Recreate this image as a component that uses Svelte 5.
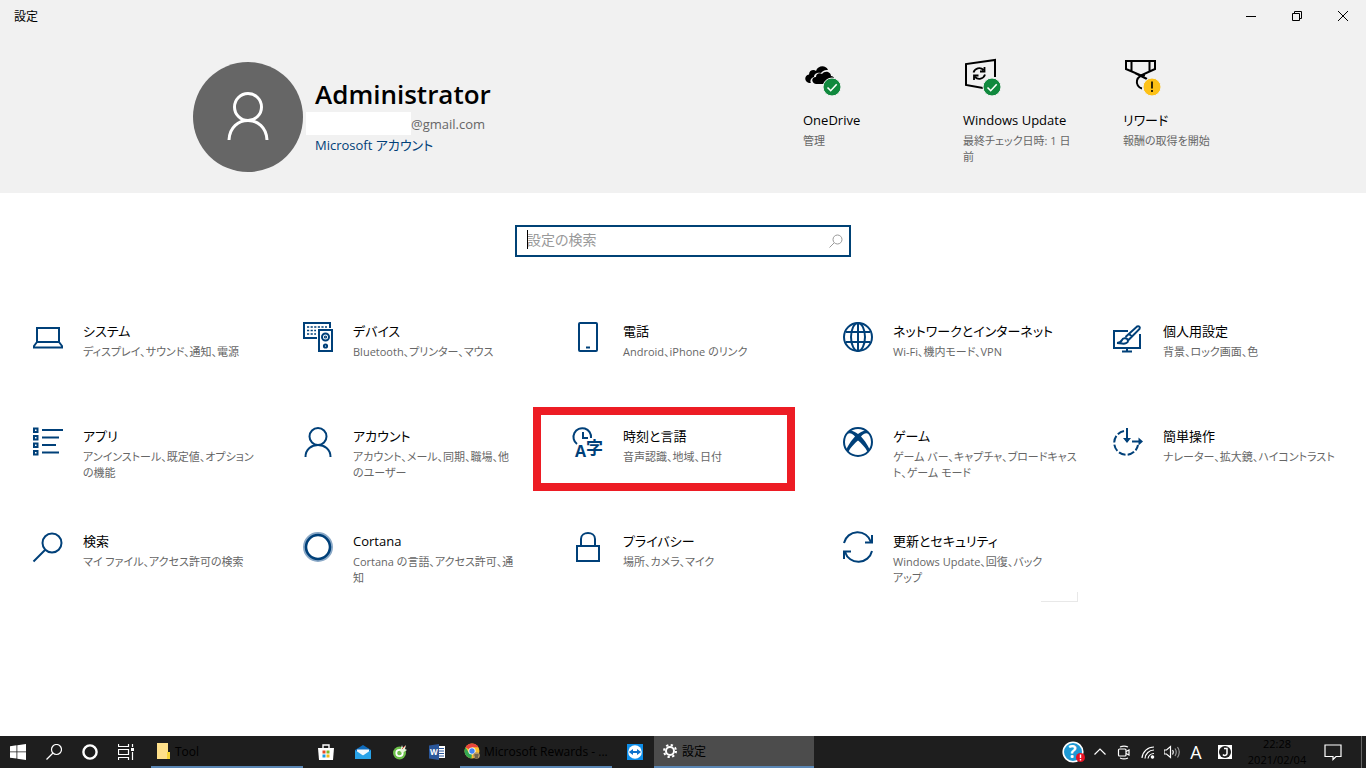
<script lang="ts">
    type Entry = { icon: string; title: string; text: string; marked?: boolean };

    const status: Entry[] = [
        { icon: 'onedrive', title: 'OneDrive', text: '管理' },
        { icon: 'update', title: 'Windows Update', text: '最終チェック日時: 1 日\n前' },
        { icon: 'rewards', title: 'リワード', text: '報酬の取得を開始' },
    ];

    const categories: Entry[] = [
        { icon: 'system', title: 'システム', text: 'ディスプレイ、サウンド、通知、電源' },
        { icon: 'devices', title: 'デバイス', text: 'Bluetooth、プリンター、マウス' },
        { icon: 'phone', title: '電話', text: 'Android、iPhone のリンク' },
        { icon: 'network', title: 'ネットワークとインターネット', text: 'Wi-Fi、機内モード、VPN' },
        { icon: 'personal', title: '個人用設定', text: '背景、ロック画面、色' },
        { icon: 'apps', title: 'アプリ', text: 'アンインストール、既定値、オプション\nの機能' },
        { icon: 'account', title: 'アカウント', text: 'アカウント、メール、同期、職場、他\nのユーザー' },
        { icon: 'time', title: '時刻と言語', text: '音声認識、地域、日付', marked: true },
        { icon: 'games', title: 'ゲーム', text: 'ゲーム バー、キャプチャ、ブロードキャス\nト、ゲーム モード' },
        { icon: 'ease', title: '簡単操作', text: 'ナレーター、拡大鏡、ハイコントラスト' },
        { icon: 'search', title: '検索', text: 'マイ ファイル、アクセス許可の検索' },
        { icon: 'cortana', title: 'Cortana', text: 'Cortana の言語、アクセス許可、通\n知' },
        { icon: 'privacy', title: 'プライバシー', text: '場所、カメラ、マイク' },
        { icon: 'security', title: '更新とセキュリティ', text: 'Windows Update、回復、バック\nアップ' },
    ];

    let query = $state('');
</script>

{#snippet check()}
    <circle cx="29" cy="30" r="9" fill="#10893e" stroke="#f1f1f1" />
    <path d="M24.5 30.5l3.2 3.2 6-6.4" fill="none" stroke="#fff" stroke-width="1.6" />
{/snippet}

{#snippet statusIcon(name: string)}
    <svg class="status-icon" viewBox="0 0 40 40" aria-hidden="true">
        {#if name === 'onedrive'}
            <path d="M6 26C1 25 1 18 6 17.500C6 13 11 12 13 14C15 8 23 8 25 13C22 12.500 19 14 18 16C13 15 11 18 11 20C7 21 7 25 8 26z" />
            <path d="M13 27C8 26 8 20 13 20C13 16 17 15.500 19 17C22 13 28 15 28 19C32 19 33 25 29 27z" />
            {@render check()}
        {:else if name === 'update'}
            <path d="M20 31L3 28V7l29-4v17" fill="none" stroke="#000" stroke-width="2" />
            <path d="M10.500 15.500a6 6 0 0 1 10-2.500M21.500 10v4.500h-4.500M22 17.500a6 6 0 0 1-10 2.500M11 23v-4.500h4.500" fill="none" stroke="#000" stroke-width="1.8" />
            {@render check()}
        {:else}
            <path d="M3 4h29v8L18 18.500 3 12zM8.500 4v10M26.500 4v10M12 16l12 6" fill="none" stroke="#000" stroke-width="2" />
            <path d="M22 18.500a6.500 6.500 0 1 0-3 13" fill="none" stroke="#000" stroke-width="2" />
            <circle cx="29" cy="30" r="9" fill="#fdc116" stroke="#f1f1f1" />
            <path d="M29 24.500v7M29 33v2" stroke="#000" stroke-width="1.6" />
        {/if}
    </svg>
{/snippet}

{#snippet icon(name: string)}
    <svg class="icon" viewBox="0 0 30 30" aria-hidden="true">
        {#if name === 'system'}
            <path d="M4 6h22v14H4zM4 20L1 24v1.500h28V24l-3-4" />
        {:else if name === 'devices'}
            <path d="M14 16H1V1h26v5" />
            <path d="M4 5h20M4 8.500h9M4 12h9" stroke-width="1.600" stroke-dasharray="2.200 1.400" />
            <rect x="16" y="8" width="13" height="21" />
            <circle cx="22.500" cy="15" r="3.500" /><circle cx="22.500" cy="15" r=".6" />
            <circle cx="22.500" cy="24" r="1.600" />
        {:else if name === 'phone'}
            <rect x="6" y="1" width="18" height="28" rx="1" /><path d="M13 25.500h4" />
        {:else if name === 'network'}
            <circle cx="15" cy="15" r="14" /><ellipse cx="15" cy="15" rx="7" ry="14" />
            <path d="M15 1v28M3 10h24M3 20h24" />
        {:else if name === 'personal'}
            <path d="M15 9H1v17h26V12M14 26v3M9 29.500h10" />
            <path d="M4 21c3 0 4-1 5-3 1-3 6-2 6 1 0 2-3 3-6 2.500zM12.500 15L24 4.500c2-1 3.500.5 2.500 2.500L15.500 18M16 12l3 2.500" />
        {:else if name === 'apps'}
            <path d="M1 1.500h3.500v3.500H1zM1 9h3.500v3.500H1zM1 16.500h3.500V20H1zM1 24h3.500v3.500H1zM9 3h21M9 10.500h17M9 18h14M9 25.500h17" />
        {:else if name === 'account'}
            <circle cx="15" cy="9.500" r="8.500" /><path d="M2.500 30c0-16 25-16 25 0" />
        {:else if name === 'time'}
            <path d="M4 17A8.800 8.800 0 1 1 18 11M10 5v6h5" />
            <text x="2" y="30" font-size="16">A</text>
            <text x="13" y="27" font-size="17">字</text>
        {:else if name === 'games'}
            <circle cx="15" cy="15" r="14" />
            <path d="M6 4c3-1 6 1 9 3 3-2 6-4 9-3l2 3c-3-2-6 0-8 2.500 4 4.500 8 10 8.500 13.500l-2 2C23 21 18 16 15 13.500 12 16 7 21 5.500 25l-2-2C4 19.500 8 14 12 9.500 10 7 7 5 4 7z" fill="currentColor" stroke="none" />
        {:else if name === 'ease'}
            <path d="M11 4A12 12 0 1 0 25 18" stroke-dasharray="7 2.200" />
            <path d="M14 1v13M19 14.500h9" />
            <path d="M10 11h8l-4 5zM25.500 10.500v8l4.500-4z" fill="currentColor" stroke="none" />
        {:else if name === 'search'}
            <circle cx="19" cy="11" r="9.500" /><path d="M12 18L.5 29.500" />
        {:else if name === 'cortana'}
            <circle cx="15" cy="15" r="13" stroke="#8ba9c7" stroke-width="4" />
            <circle cx="15" cy="15" r="12" stroke-width="2.500" />
        {:else if name === 'privacy'}
            <path d="M4 14h22v15H4zM8 14V7c0-8 14-8 14 0v7" />
        {:else}
            <path d="M1 11A14 14 0 0 1 28 10M29 3v7.500h-7M29 19A14 14 0 0 1 2 20M1 27v-7.500h7" />
        {/if}
    </svg>
{/snippet}

<div class="window">
    <header>
        <div class="titlebar">
            <h1>設定</h1>
            <div class="controls">
                <button aria-label="最小化"><svg viewBox="0 0 12 12"><path d="M1 6.500h10" /></svg></button>
                <button aria-label="元に戻す"><svg viewBox="0 0 12 12"><path d="M1.500 3.500h7v7h-7zM3.500 3.500v-2h7v7h-2" /></svg></button>
                <button aria-label="閉じる"><svg viewBox="0 0 12 12"><path d="M1 1l10 10M11 1L1 11" /></svg></button>
            </div>
        </div>

        <div class="summary">
            <div class="profile">
                <div class="avatar">
                    <svg viewBox="0 0 42 50" aria-hidden="true"><circle cx="21" cy="15" r="13.500" /><path d="M2 48c1-26 37-26 38 0" /></svg>
                </div>
                <div class="who">
                    <h2>Administrator</h2>
                    <p class="mail"><span class="blank"></span>@gmail.com</p>
                    <a href="#account">Microsoft アカウント</a>
                </div>
            </div>
            <div class="statuses">
                {#each status as item}
                    <a class="status" href="#{item.icon}">
                        {@render statusIcon(item.icon)}
                        <span class="title">{item.title}</span>
                        <span class="text">{item.text}</span>
                    </a>
                {/each}
            </div>
        </div>
    </header>

    <main>
        <div class="search">
            <input type="text" placeholder="設定の検索" aria-label="設定の検索" bind:value={query} />
            <span class="caret"></span>
            <svg viewBox="0 0 14 14" aria-hidden="true"><circle cx="8.500" cy="5.500" r="4.500" /><path d="M5 9L.5 13.500" /></svg>
        </div>

        <nav>
            {#each categories as item}
                <a class="tile" href="#{item.icon}">
                    {@render icon(item.icon)}
                    <span class="label">
                        <span class="title">{item.title}</span>
                        <span class="text">{item.text}</span>
                    </span>
                    {#if item.marked}<span class="mark"></span>{/if}
                    {#if item.icon === 'security'}<span class="corner"></span>{/if}
                </a>
            {/each}
        </nav>
    </main>

    <footer>
        <button class="key" aria-label="スタート">
            <svg viewBox="0 0 16 16"><path d="M0 2.300l6.500-1v6.200H0zM7.300 1.200L16 0v7.500H7.300zM0 8.300h6.500v6.300L0 13.700zM7.300 8.300H16V16l-8.700-1.200z" fill="#fff" /></svg>
        </button>
        <button class="key" aria-label="検索">
            <svg viewBox="0 0 16 16" class="line"><circle cx="10.500" cy="5.500" r="5" /><path d="M7 9L.5 15.500" /></svg>
        </button>
        <button class="key" aria-label="Cortana">
            <svg viewBox="0 0 16 16" class="line"><circle cx="8" cy="8" r="6.600" stroke-width="2.400" /></svg>
        </button>
        <button class="key" aria-label="タスク ビュー">
            <svg viewBox="0 0 16 16" class="line"><path d="M.5 0v2.500h10V0M.5 5.500h10v5H.5zM.5 16v-2.500h10V16M14.500 0v3M14.500 8v8" /><path d="M13 5.500h3" stroke-width="3" /></svg>
        </button>
        <button class="task first">
            <svg viewBox="0 0 16 16"><path d="M2 0h11v16H2z" fill="#ffe08a" /><path d="M12 9h3v7h-3z" fill="#f6d438" /></svg>
            <span>Tool</span>
        </button>
        <button class="app" aria-label="Microsoft Store">
            <svg viewBox="0 0 16 16"><path d="M5 4V1h6v3" fill="none" stroke="#fff" stroke-width="1.400" /><path d="M0 4h16l-1 12H1z" fill="#fff" /><path d="M4.500 6.500h3v3h-3z" fill="#e74c25" /><path d="M8.500 6.500h3v3h-3z" fill="#7db928" /><path d="M4.500 10.500h3v3h-3z" fill="#1d9de0" /><path d="M8.500 10.500h3v3h-3z" fill="#f5b914" /></svg>
        </button>
        <button class="app" aria-label="メール">
            <svg viewBox="0 0 16 16"><path d="M0 6l8-5 8 5v9H0z" fill="#0f6cbd" /><path d="M2 5.500h12V9l-6 3-6-3z" fill="#f2f8fc" /><path d="M0 6l8 5.500L16 6v9H0z" fill="#29a3e8" /></svg>
        </button>
        <button class="app" aria-label="Cốc Cốc">
            <svg viewBox="0 0 16 16"><circle cx="7.500" cy="9" r="6.500" fill="#6cc04a" /><circle cx="7.500" cy="9" r="3.200" fill="none" stroke="#fff" stroke-width="1.800" /><path d="M8 7l2-6 1 3 3-3-1 4 2 1-5 3z" fill="#e5f4d9" /><path d="M10 5l3-3" stroke="#e4584f" /></svg>
        </button>
        <button class="app" aria-label="Word">
            <svg viewBox="0 0 16 16"><path d="M8 2h8v12H8z" fill="#fff" /><path d="M10 4.500h5M10 7h5M10 9.500h5M10 12h5" stroke="#2b579a" /><path d="M0 1.500L10 0v16L0 14.500z" fill="#2b579a" /><text x="1" y="11" font-size="8" font-weight="700" fill="#fff">W</text></svg>
        </button>
        <button class="task browser">
            <svg viewBox="0 0 16 16"><circle cx="8" cy="8" r="7.500" fill="#fbc02d" /><path d="M8 8L1.500 4.200A7.500 7.500 0 0 1 14.500 4.200H8z" fill="#e8453c" /><path d="M8 8l-.5 7.500A7.500 7.500 0 0 1 1.500 4.200L5 10z" fill="#34a853" /><circle cx="8" cy="8" r="3.600" fill="#fff" /><circle cx="8" cy="8" r="2.700" fill="#4285f4" /><circle cx="12.500" cy="12.500" r="3.300" fill="#b39667" /><path d="M10.500 12h4M11 14h3" stroke="#333" /></svg>
            <span>Microsoft Rewards - ...</span>
        </button>
        <button class="app wide" aria-label="TeamViewer">
            <svg viewBox="0 0 16 16"><path d="M0 0h16v16H0z" fill="#0e8ee9" /><circle cx="8" cy="8" r="6.800" fill="#fff" /><path d="M1.800 8L6 5v2h4V5l4.200 3L10 11V9H6v2z" fill="#0e72cc" /></svg>
        </button>
        <button class="task active">
            <svg viewBox="0 0 16 16" class="line"><circle cx="8" cy="8" r="4" stroke-width="2" /><circle cx="8" cy="8" r="6" stroke-width="2" stroke-dasharray="2.300 2.412" /></svg>
            <span>設定</span>
        </button>

        <div class="tray">
            <button class="help" aria-label="ヘルプ">
                <svg viewBox="0 0 24 22"><circle cx="11" cy="11" r="9.800" fill="#1f9ad6" stroke="#fff" stroke-width="1.600" /><text x="6.500" y="17" font-size="17" font-weight="700" fill="#fff">?</text><circle cx="18.500" cy="16.500" r="4.500" fill="#e81123" /><path d="M18.500 13.500v3.500M18.500 18v1.500" stroke="#fff" stroke-width="1.400" /></svg>
            </button>
            <button aria-label="隠れているインジケーター"><svg viewBox="0 0 16 16" class="line"><path d="M2.500 10.500L8 5l5.500 5.500" /></svg></button>
            <button aria-label="会議"><svg viewBox="0 0 16 16" class="line"><rect x="2.500" y="5" width="7.500" height="7" rx="1" /><path d="M10 7.500l3-1.500v5l-3-1.500M4 3a6 3 0 0 1 8 0M4 14a6 3 0 0 0 8 0" /></svg></button>
            <button aria-label="ネットワーク"><svg viewBox="0 0 16 16" class="line"><path d="M2 14A12 12 0 0 1 14 3M5 14.500A9 9 0 0 1 14 6M8 14.500A6 6 0 0 1 14 9.500" /><circle cx="12.500" cy="13" r="1.200" fill="#fff" /></svg></button>
            <button aria-label="音量"><svg viewBox="0 0 16 16" class="line"><path d="M0 6h2.500L6.500 2.500v11L2.500 10H0zM8.500 6q1.500 2 0 4.500" /><path d="M11 4.500q2.500 3.500 0 7.500M13.500 3q3.500 5 0 10.500" stroke="#999" /></svg></button>
            <button class="ime">A</button>
            <button class="ime-mode" aria-label="IME"><svg viewBox="0 0 14 14"><path d="M0 0h14v14H0z" fill="#fff" /><circle cx="7" cy="7" r="6" fill="#1e1e1e" /><path d="M6 3.500h3v5c0 2-3 2.500-4 1" fill="none" stroke="#fff" stroke-width="1.500" /></svg></button>
            <div class="clock"><span>22:28</span><span>2021/02/04</span></div>
            <button class="notice" aria-label="通知"><svg viewBox="0 0 18 18" class="line"><path d="M1 2h16v11.500h-5l-3 3v-3H1z" /></svg></button>
            <button class="desktop" aria-label="デスクトップの表示"></button>
        </div>
    </footer>
</div>

<style>
    :global(body) {
        margin: 0;
    }

    .window {
        min-height: 100vh;
        display: flex;
        flex-direction: column;
        background: #fff;
        color: #000;
        font-family: "Open Sans", "Noto Sans CJK JP", sans-serif;
        font-size: 13px;
        font-feature-settings: "palt";
    }

    h1, h2, p {
        margin: 0;
    }

    a {
        color: inherit;
        text-decoration: none;
    }

    button {
        display: flex;
        align-items: center;
        justify-content: center;
        padding: 0;
        border: none;
        background: none;
        color: inherit;
        font: inherit;
    }

    /* header */
    header {
        height: 193px;
        background: #f1f1f1;
    }

    .titlebar {
        display: flex;
        justify-content: space-between;
        height: 32px;
    }

    h1 {
        padding-left: 14px;
        font-size: 12px;
        font-weight: 400;
        line-height: 34px;
    }

    .controls {
        display: flex;
    }

    .controls button {
        width: 46px;
        height: 32px;
    }

    .controls svg {
        width: 12px;
        height: 12px;
        fill: none;
        stroke: #000;
    }

    .summary {
        display: flex;
        justify-content: space-between;
        padding: 25px 83px 0 193px;
    }

    .profile {
        display: flex;
        padding-top: 5px;
    }

    .avatar {
        display: flex;
        align-items: center;
        justify-content: center;
        width: 110px;
        height: 110px;
        border-radius: 50%;
        background: #666;
    }

    .avatar svg {
        width: 42px;
        height: 50px;
        fill: none;
        stroke: #fff;
        stroke-width: 3;
    }

    .who {
        padding: 14px 0 0 12px;
    }

    h2 {
        font-size: 26px;
        font-weight: 600;
        line-height: 36px;
    }

    .mail {
        display: flex;
        height: 23px;
        color: #666;
        line-height: 24px;
    }

    .blank {
        width: 105px;
        margin-left: -9px;
        background: #fff;
    }

    .who a {
        color: #004079;
        line-height: 20px;
    }

    .statuses {
        display: flex;
    }

    .status {
        display: flex;
        flex-direction: column;
        width: 160px;
    }

    .status-icon {
        width: 40px;
        height: 40px;
        margin-bottom: 14px;
    }

    .title {
        line-height: 18px;
    }

    .text {
        margin-top: 4px;
        color: #666;
        font-size: 11px;
        line-height: 16px;
        white-space: pre;
    }

    /* content */
    main {
        flex: 1;
    }

    .search {
        position: relative;
        width: 336px;
        margin: 32px auto 65px;
    }

    .search input {
        display: block;
        box-sizing: border-box;
        width: 100%;
        height: 32px;
        padding: 0 32px 3px 10px;
        border: 2px solid #004275;
        outline: none;
        font: inherit;
        font-size: 14px;
        font-feature-settings: inherit;
    }

    .search input::placeholder {
        color: #999;
    }

    .search svg {
        position: absolute;
        top: 9px;
        right: 8px;
        width: 14px;
        height: 14px;
        fill: none;
        stroke: #999;
    }

    .caret {
        position: absolute;
        top: 5px;
        left: 12px;
        width: 1px;
        height: 19px;
        background: #000;
    }

    nav {
        display: grid;
        grid-template-columns: repeat(5, minmax(0, 1fr));
        padding: 0 8px;
    }

    .tile {
        position: relative;
        display: flex;
        gap: 20px;
        min-height: 105px;
        padding-left: 25px;
        box-sizing: border-box;
    }

    .icon {
        flex: none;
        width: 30px;
        height: 30px;
        overflow: visible;
        color: #004079;
        fill: none;
        stroke: currentColor;
        stroke-width: 2;
    }

    .icon text {
        fill: currentColor;
        stroke: none;
        font-weight: 700;
    }

    .label {
        display: flex;
        flex-direction: column;
    }

    .mark {
        position: absolute;
        top: -20px;
        left: -15px;
        right: 23px;
        height: 68px;
        border: 8px solid #ed1c24;
    }

    .corner {
        position: absolute;
        top: 60px;
        right: 10px;
        width: 36px;
        height: 9px;
        border-right: 1px solid #e8e8e8;
        border-bottom: 1px solid #e8e8e8;
    }

    /* taskbar */
    footer {
        display: flex;
        height: 32px;
        background: #1e1e1e;
        color: #000;
        font-size: 12px;
    }

    footer svg {
        width: 16px;
        height: 16px;
    }

    .line {
        fill: none;
        stroke: #fff;
        stroke-width: 1.2;
    }

    .key {
        width: 36px;
    }

    .app {
        width: 37px;
    }

    .app.wide {
        width: 42px;
        padding-left: 4px;
        box-sizing: border-box;
    }

    .task {
        justify-content: flex-start;
        gap: 4px;
        width: 152px;
        padding-left: 4px;
        box-sizing: border-box;
        border-bottom: 2px solid #5a86b4;
        white-space: nowrap;
    }

    .task.first {
        margin: 0 4px 0 7px;
    }

    .task.browser {
        margin-left: 5px;
    }

    .task.active {
        width: 160px;
        padding-left: 8px;
        background: #4c4c4c;
    }

    .tray {
        display: flex;
        margin-left: auto;
    }

    .tray button {
        width: 24px;
    }

    .tray .help {
        width: 28px;
    }

    .help svg {
        width: 24px;
        height: 22px;
    }

    .tray .ime {
        color: #fff;
        font-size: 18px;
    }

    .tray .ime-mode {
        width: 34px;
    }

    .ime-mode svg {
        width: 14px;
        height: 14px;
    }

    .clock {
        display: flex;
        flex-direction: column;
        align-items: center;
        width: 70px;
        font-size: 11px;
        line-height: 16px;
    }

    .tray .notice {
        width: 42px;
    }

    .notice svg {
        width: 18px;
        height: 18px;
    }

    .tray .desktop {
        width: 5px;
        margin-left: 7px;
        border-left: 1px solid #666;
    }
</style>
